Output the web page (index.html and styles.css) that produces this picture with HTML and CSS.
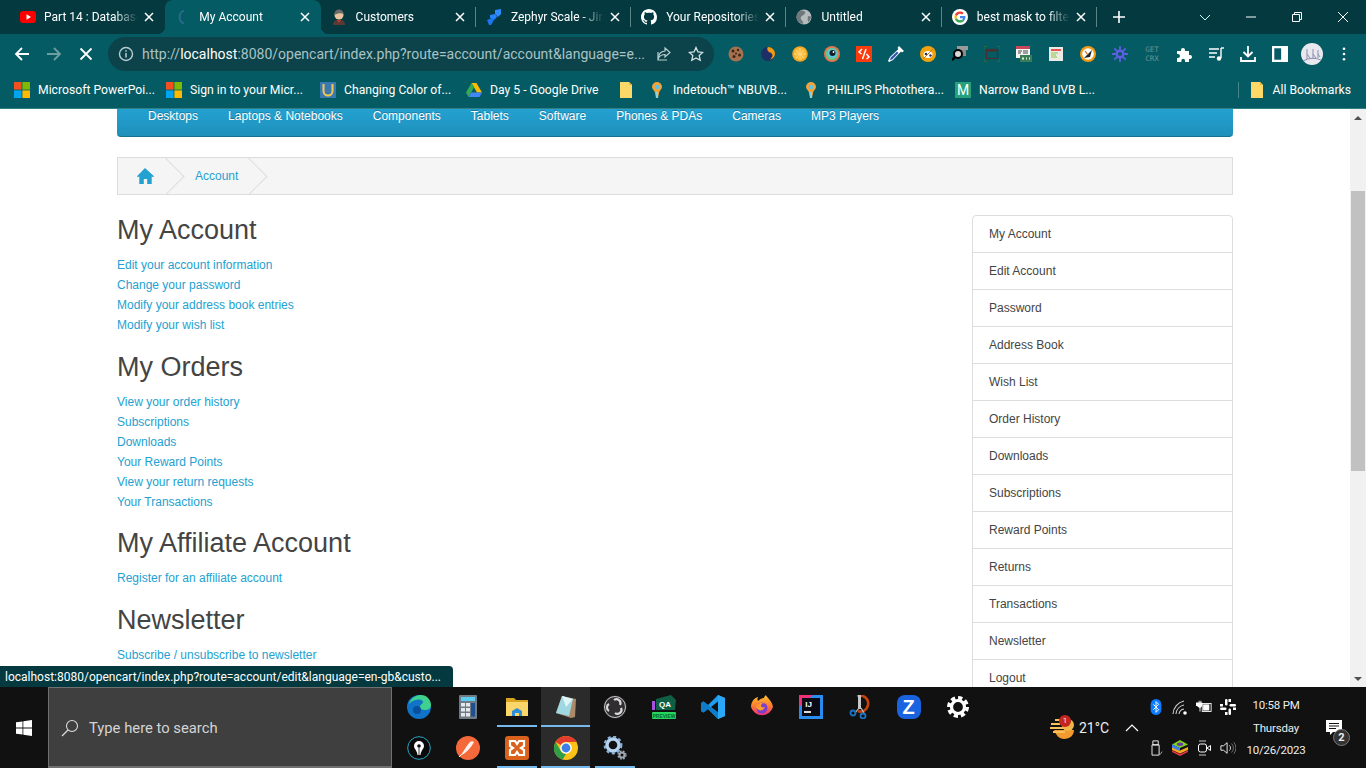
FILE: index.html
```html
<!DOCTYPE html>
<html lang="en">
<head>
  <meta charset="UTF-8" />
  <title>My Account</title>
  <link rel="stylesheet" href="styles.css">
</head>
<body>

<svg class="defs" width="0" height="0">
  <defs>
    <linearGradient id="fox" x1="0" y1="0" x2="0" y2="1"><stop offset="0" stop-color="#ffc12e"/><stop offset=".55" stop-color="#ff7a2f"/><stop offset="1" stop-color="#ec2f78"/></linearGradient>
  </defs>
  <symbol id="x" viewBox="0 0 10 10"><path d="M1 1l8 8M9 1l-8 8" stroke="#fff" stroke-width="1.5" fill="none"/></symbol>
  <symbol id="ms" viewBox="0 0 16 16"><rect width="7.6" height="7.6" fill="#f25022"/><rect x="8.4" width="7.6" height="7.6" fill="#7fba00"/><rect y="8.4" width="7.6" height="7.6" fill="#00a4ef"/><rect x="8.4" y="8.4" width="7.6" height="7.6" fill="#ffb900"/></symbol>
  <symbol id="note" viewBox="0 0 16 16"><path d="M2 0h9l3 3v13H2z" fill="#fcd868"/><path d="M11 0l3 3h-3z" fill="#e8b93c"/></symbol>
  <symbol id="pin" viewBox="0 0 16 16"><path d="M8 0a5 5 0 0 1 5 5c0 2-2 3-2.8 5L9 16H7l-1.200-6C5 8 3 7 3 5a5 5 0 0 1 5-5z" fill="#f2a33a"/><circle cx="8" cy="5" r="2.200" fill="#5cc4e8"/><rect x="7" y="10" width="2" height="6" fill="#8fd0de"/></symbol>
  <symbol id="chrome" viewBox="0 0 24 24"><circle cx="12" cy="12" r="12" fill="#fbc116"/><path d="M12 0a12 12 0 0 1 10.400 6H12a6 6 0 0 0-5.200 3L1.600 6A12 12 0 0 1 12 0z" fill="#e33b2e"/><path d="M1.600 6l5.200 9a6 6 0 0 0 5.200 3l-3.400 5.600A12 12 0 0 1 1.600 6z" fill="#2f9e49"/><circle cx="12" cy="12" r="5.800" fill="#fff"/><circle cx="12" cy="12" r="4.400" fill="#3c7fe6"/></symbol>
</svg>

<header class="tabbar">
  <div class="tab">
    <svg class="tab-ico" viewBox="0 0 16 16"><rect y="2" width="16" height="12" rx="3" fill="#f00"/><path d="M6.500 5.200v5.600L11 8z" fill="#fff"/></svg>
    <span class="tab-title">Part 14 : Databases</span>
    <svg class="tab-x"><use href="#x"/></svg>
  </div>
  <div class="tab tab-active">
    <svg class="tab-ico" viewBox="0 0 16 16"><path d="M9 1.500A7 7 0 0 0 9 14.500" stroke="#2a6c8c" stroke-width="1.800" fill="none"/></svg>
    <span class="tab-title">My Account</span>
    <svg class="tab-x"><use href="#x"/></svg>
  </div>
  <div class="tab tab-sep">
    <svg class="tab-ico" viewBox="0 0 16 16"><path d="M2 16c0-4 2-5 6-5s6 1 6 5z" fill="#5b3a34"/><path d="M6 11h4l-2 3z" fill="#c0392b"/><circle cx="8" cy="6" r="4.500" fill="#e8c4a0"/><path d="M3.500 6c0-4 2-5.500 4.500-5.500S12.500 2 12.500 5C10 4 7 4 3.500 6z" fill="#6b6b6b"/></svg>
    <span class="tab-title">Customers</span>
    <svg class="tab-x"><use href="#x"/></svg>
  </div>
  <div class="tab tab-sep">
    <svg class="tab-ico" viewBox="0 0 16 16"><path d="M9 1l6-1v5l-3 3-3-3z" fill="#2f8cff"/><path d="M4 6l5-1 2 3-3 3-4-2z" fill="#2684ff"/><path d="M1 11l5-2 2 2-3 5H3z" fill="#1c74f0"/></svg>
    <span class="tab-title">Zephyr Scale - Jira</span>
    <svg class="tab-x"><use href="#x"/></svg>
  </div>
  <div class="tab tab-sep">
    <svg class="tab-ico" viewBox="0 0 16 16"><path fill="#fff" d="M8 0C3.580 0 0 3.580 0 8c0 3.540 2.290 6.530 5.470 7.590.4.070.55-.170.55-.410 0-.190-.010-.820-.010-1.490-2.010.370-2.530-.490-2.690-.940-.090-.230-.480-.940-.820-1.130-.280-.150-.680-.520-.010-.530.630-.010 1.080.580 1.230.820.720 1.210 1.870.870 2.330.660.070-.520.280-.870.510-1.070-1.780-.2-3.640-.890-3.640-3.950 0-.870.310-1.590.820-2.150-.080-.2-.360-1.020.080-2.120 0 0 .670-.210 2.200.820.640-.180 1.320-.270 2-.270.680 0 1.360.090 2 .270 1.530-1.040 2.200-.820 2.200-.820.440 1.100.160 1.920.080 2.120.510.560.820 1.270.820 2.150 0 3.070-1.870 3.750-3.650 3.950.290.250.540.730.540 1.480 0 1.070-.010 1.930-.010 2.200 0 .210.150.460.550.380A8.013 8.013 0 0 0 16 8c0-4.420-3.580-8-8-8z"/></svg>
    <span class="tab-title">Your Repositories</span>
    <svg class="tab-x"><use href="#x"/></svg>
  </div>
  <div class="tab tab-sep">
    <svg class="tab-ico" viewBox="0 0 16 16"><circle cx="8" cy="8" r="7.500" fill="#b5bcbe"/><path d="M5 1.500c3 0 5 1 4 3S6 6 5 8s1 3 2 5-1 2-2 1.500C2 13 .5 10.500.5 8S2 2.500 5 1.500zM12 7l3 .5c0 2-1 4-2.500 5.500-1-1-1-3-.5-6z" fill="#6f787a"/></svg>
    <span class="tab-title">Untitled</span>
    <svg class="tab-x"><use href="#x"/></svg>
  </div>
  <div class="tab tab-sep">
    <svg class="tab-ico" viewBox="0 0 16 16"><circle cx="8" cy="8" r="8" fill="#fff"/><path d="M13.400 8.100c0-.4 0-.8-.1-1.100H8v2.200h3c-.1.700-.5 1.300-1.100 1.700l1.800 1.400c1-1 1.700-2.400 1.700-4.200z" fill="#4285f4"/><path d="M8 13.500c1.500 0 2.700-.5 3.700-1.300l-1.800-1.400c-.5.300-1.100.5-1.900.5-1.400 0-2.700-1-3.100-2.300L3 10.400c.9 1.900 2.800 3.100 5 3.100z" fill="#34a853"/><path d="M4.900 9c-.2-.7-.2-1.400 0-2L3 5.600C2.300 7.100 2.300 8.900 3 10.400z" fill="#fbbc05"/><path d="M8 4.700c.8 0 1.500.3 2.100.8l1.600-1.600C10.700 3 9.400 2.500 8 2.500c-2.200 0-4.100 1.200-5 3.100L4.900 7c.4-1.300 1.700-2.300 3.100-2.300z" fill="#ea4335"/></svg>
    <span class="tab-title">best mask to filter</span>
    <svg class="tab-x"><use href="#x"/></svg>
  </div>
  <svg class="new-tab" viewBox="0 0 12 12"><path d="M6 0v12M0 6h12" stroke="#fff" stroke-width="1.600"/></svg>
  <div class="win-btns">
    <svg viewBox="0 0 12 12"><path d="M1 4l5 5 5-5" stroke="#cfe" stroke-width="1" fill="none"/></svg>
    <svg viewBox="0 0 12 12"><path d="M1 6h10" stroke="#fff" stroke-width="1"/></svg>
    <svg viewBox="0 0 12 12"><path d="M1.500 3.500h7v7h-7zM3.500 3.500v-2h7v7h-2" stroke="#fff" stroke-width="1" fill="none"/></svg>
    <svg viewBox="0 0 12 12"><path d="M1 1l10 10M11 1L1 11" stroke="#fff" stroke-width="1"/></svg>
  </div>
</header>

<nav class="toolbar">
  <div class="nav-btn"><svg viewBox="0 0 16 16"><path d="M15 8H2M8 2L2 8l6 6" stroke="#fff" stroke-width="1.800" fill="none"/></svg></div>
  <div class="nav-btn"><svg viewBox="0 0 16 16"><path d="M1 8h13M8 2l6 6-6 6" stroke="#6f9ea2" stroke-width="1.800" fill="none"/></svg></div>
  <div class="nav-btn"><svg viewBox="0 0 16 16"><path d="M2.500 2.500l11 11M13.500 2.500l-11 11" stroke="#fff" stroke-width="1.800"/></svg></div>
  <div class="omnibox">
    <svg class="omni-info" viewBox="0 0 16 16"><circle cx="8" cy="8" r="6.500" stroke="#b9cdd0" stroke-width="1.400" fill="none"/><path d="M8 7v4.500M8 4.300v1.400" stroke="#b9cdd0" stroke-width="1.500"/></svg>
    <span class="url"><span class="url-dim">http://</span>localhost<span class="url-dim">:8080/opencart/index.php?route=account/account&amp;language=e...</span></span>
    <svg class="omni-share" viewBox="0 0 16 16"><path d="M9 2l5 4.500L9 11V8.500C6 8.500 4 9.500 2.500 12c0-4 2.500-6.500 6.500-7z" stroke="#b9cdd0" stroke-width="1.200" fill="none"/><path d="M11 14H2V6" stroke="#b9cdd0" stroke-width="1.200" fill="none"/></svg>
    <svg class="omni-star" viewBox="0 0 16 16"><path d="M8 1.500l2 4.400 4.700.5-3.500 3.200 1 4.700L8 11.900l-4.200 2.400 1-4.700L1.300 6.400 6 5.900z" stroke="#d5e2e4" stroke-width="1.300" fill="none"/></svg>
  </div>
  <div class="exts">
    <div class="ext"><svg viewBox="0 0 16 16"><circle cx="8" cy="8" r="7.500" fill="#a5714f"/><circle cx="5" cy="5" r="1.500" fill="#3e2415"/><circle cx="10" cy="4" r="1.200" fill="#3e2415"/><circle cx="11.500" cy="9" r="1.500" fill="#3e2415"/><circle cx="6" cy="10.500" r="1.500" fill="#3e2415"/><circle cx="8" cy="7.500" r="1" fill="#3e2415"/></svg></div>
    <div class="ext"><svg viewBox="0 0 16 16"><circle cx="8" cy="8" r="7" fill="#1d2f66"/><path d="M8 1c4 0 7 3 7 6.500 0 3-2 5.500-5 6 2.500-2 3-4 2-5.500S9 6.500 8 5 7 2 8 1z" fill="#f29a12"/></svg></div>
    <div class="ext"><svg viewBox="0 0 16 16"><circle cx="8" cy="8" r="7.800" fill="#f4a623"/><circle cx="8" cy="8" r="6" fill="#fbbd3c"/><path d="M8 2v12M2 8h12M3.800 3.800l8.400 8.400M12.200 3.800l-8.400 8.400" stroke="#ffe19a" stroke-width=".7"/></svg></div>
    <div class="ext"><svg viewBox="0 0 16 16"><circle cx="8" cy="8" r="8" fill="#e8734a"/><circle cx="8" cy="8" r="6.200" fill="#67c587"/><circle cx="8.300" cy="7.400" r="4.600" fill="#5fc8e0"/><circle cx="8.500" cy="7" r="3" fill="#14202b"/><circle cx="9.500" cy="6" r=".9" fill="#fff"/></svg></div>
    <div class="ext"><svg viewBox="0 0 16 16"><rect width="16" height="16" fill="#fc3a0c"/><path d="M6 3L3 6l2.500 2M6.500 13L10 3M10.500 8l2.500 3-2.500 2" stroke="#fff" stroke-width="1.500" fill="none"/></svg></div>
    <div class="ext"><svg viewBox="0 0 16 16"><path d="M11 0l5 5-2 1.500-1 -1L5 14l-4 2-1-1 2-4 8.500-8-1-1z" fill="#fff"/><path d="M9 5.500L2.800 11.500 1.800 14.200l2.700-1L10.500 7z" fill="#3558b8"/></svg></div>
    <div class="ext"><svg viewBox="0 0 16 16"><circle cx="8" cy="8" r="8" fill="#f2a20c"/><ellipse cx="8" cy="8.500" rx="4.500" ry="3.500" fill="#fff"/><circle cx="6" cy="8" r="1.300" fill="#2b2b55"/><circle cx="10.500" cy="9.500" r="1.200" fill="#2b2b55"/><path d="M3 13L13 3" stroke="#c9780a" stroke-width="1"/></svg></div>
    <div class="ext"><svg viewBox="0 0 16 16"><rect x="5" y="0" width="11" height="4" fill="#9a9a9a"/><rect x="10" y="4" width="4" height="6" fill="#8a8a8a"/><circle cx="6" cy="8" r="4" stroke="#000" stroke-width="2" fill="#d8d8d8"/><path d="M3 11l-3 3" stroke="#000" stroke-width="2.500"/></svg></div>
    <div class="ext"><svg viewBox="0 0 16 16"><path d="M0 3V0h3M13 0h3v3M16 13v3h-3M3 16H0v-3" stroke="#2d6e36" stroke-width="1.300" fill="none"/><rect x="2.500" y="3.500" width="11" height="9" stroke="#4a2f30" stroke-width="1.200" fill="none"/><rect x="2.500" y="3.500" width="11" height="2" fill="#4a2f30"/></svg></div>
    <div class="ext"><svg viewBox="0 0 16 16"><rect y="0" width="14" height="12" fill="#f4f4f4"/><rect width="14" height="3" fill="#c9455a"/><path d="M2 5h4M2 7h3M7 5h5M7 7h5" stroke="#333" stroke-width=".9"/><rect x="4" y="9" width="12" height="7" fill="#3a7d58"/><path d="M6 12.500h2M10 12.500h1M13 12.500h1" stroke="#d8f5d8" stroke-width="2"/></svg></div>
    <div class="ext"><svg viewBox="0 0 16 16"><rect width="14" height="14" x="1" y="1" fill="#eceae6"/><rect x="3" y="3" width="10" height="2" fill="#e9554e"/><path d="M3 7h7M3 9h5M3 11h6" stroke="#8dc63f" stroke-width="1"/></svg></div>
    <div class="ext"><svg viewBox="0 0 16 16"><circle cx="8" cy="8" r="8" fill="#f29a12"/><circle cx="8" cy="8" r="5.800" fill="#fff"/><path d="M4 12l8-8-2 7z" fill="#222"/><path d="M5 5l3 4" stroke="#c7641c" stroke-width="1.200"/></svg></div>
    <div class="ext"><svg viewBox="0 0 16 16"><g stroke="#5b5fe0" stroke-width="1.800"><path d="M8 0v16M0 8h16M2.300 2.300l11.400 11.400M13.700 2.300L2.300 13.700"/></g><circle cx="8" cy="8" r="4.500" fill="#5b5fe0"/><circle cx="8" cy="8" r="2" fill="#05595f"/></svg></div>
    <div class="ext ext-crx"><span>GET</span><span>CRX</span></div>
    <div class="ext"><svg viewBox="0 0 16 16"><path d="M1 5h4V4a2 2 0 1 1 4 0v1h4v4h1a2 2 0 1 1 0 4h-1v3H9v-1.500a1.800 1.800 0 0 0-3.600 0V16H1v-4h1a2 2 0 1 0 0-4H1z" fill="#fff"/></svg></div>
    <div class="ext"><svg viewBox="0 0 16 16"><path d="M1 3h10M1 7h8M1 11h6" stroke="#fff" stroke-width="1.500"/><path d="M13 2v10" stroke="#fff" stroke-width="1.400"/><path d="M13 2h3" stroke="#fff" stroke-width="1.400"/><circle cx="11" cy="12.500" r="2.200" fill="#fff"/></svg></div>
    <div class="ext"><svg viewBox="0 0 16 16"><path d="M8 0v10M3.500 6L8 10.500 12.500 6M1 11v4h14v-4" stroke="#fff" stroke-width="1.800" fill="none"/></svg></div>
    <div class="ext"><svg viewBox="0 0 14 14"><rect x="1" y="1" width="12" height="12" stroke="#fff" stroke-width="2" fill="none"/><rect x="8" y="1" width="5" height="12" fill="#fff"/></svg></div>
    <div class="ext"><svg class="avatar" viewBox="0 0 22 22"><circle cx="11" cy="11" r="11" fill="#e8e8ee"/><path d="M6 6v10M6 11l3 4M12 6v10M12 11l3 4M17 7v8M17 11l2 3M2 18q9-5 18-1" stroke="#8d8fb0" stroke-width="1" fill="none"/></svg></div>
    <div class="ext"><svg class="dots" viewBox="0 0 4 16"><circle cx="2" cy="2" r="1.500" fill="#fff"/><circle cx="2" cy="8" r="1.500" fill="#fff"/><circle cx="2" cy="14" r="1.500" fill="#fff"/></svg></div>
  </div>
</nav>

<div class="bookmarks">
  <div class="bm"><svg class="bm-ico"><use href="#ms"/></svg><span>Microsoft PowerPoi...</span></div>
  <div class="bm"><svg class="bm-ico"><use href="#ms"/></svg><span>Sign in to your Micr...</span></div>
  <div class="bm"><svg class="bm-ico" viewBox="0 0 16 16"><rect width="16" height="16" fill="#3a78b0"/><path d="M3.500 2v7a4.500 4.500 0 0 0 9 0V2" stroke="#f5c94e" stroke-width="2" fill="none"/></svg><span>Changing Color of...</span></div>
  <div class="bm"><svg class="bm-ico" viewBox="0 0 16 16"><path d="M5.500 1h5L16 10.500h-5z" fill="#fbbc04"/><path d="M5.500 1L0 10.500 2.500 15 8 5.500z" fill="#34a853"/><path d="M2.500 15h11L16 10.500H5z" fill="#4285f4"/></svg><span>Day 5 - Google Drive</span></div>
  <div class="bm"><svg class="bm-ico"><use href="#note"/></svg></div>
  <div class="bm"><svg class="bm-ico"><use href="#pin"/></svg><span>Indetouch™ NBUVB...</span></div>
  <div class="bm"><svg class="bm-ico"><use href="#pin"/></svg><span>PHILIPS Photothera...</span></div>
  <div class="bm"><div class="bm-m">M</div><span>Narrow Band UVB L...</span></div>
  <div class="bm bm-all"><svg class="bm-ico"><use href="#note"/></svg><span>All Bookmarks</span></div>
</div>

<div class="viewport">
  <main class="page">
    <div class="container">
      <ul class="menu">
        <li>Desktops</li>
        <li>Laptops &amp; Notebooks</li>
        <li>Components</li>
        <li>Tablets</li>
        <li>Software</li>
        <li>Phones &amp; PDAs</li>
        <li>Cameras</li>
        <li>MP3 Players</li>
      </ul>

      <ul class="breadcrumb">
        <li><svg class="home" viewBox="0 0 18 16"><path d="M9 0l9 8.200-1 1.100-1.300-1.100V16h-4.500v-5H7.800v5H3.300V8.200L2 9.300 1 8.200z" fill="#23a1d1"/></svg></li>
        <li><a href="#">Account</a></li>
      </ul>

      <div class="columns">
        <div class="content">
          <h2>My Account</h2>
          <ul class="links">
            <li><a href="#">Edit your account information</a></li>
            <li><a href="#">Change your password</a></li>
            <li><a href="#">Modify your address book entries</a></li>
            <li><a href="#">Modify your wish list</a></li>
          </ul>
          <h2>My Orders</h2>
          <ul class="links">
            <li><a href="#">View your order history</a></li>
            <li><a href="#">Subscriptions</a></li>
            <li><a href="#">Downloads</a></li>
            <li><a href="#">Your Reward Points</a></li>
            <li><a href="#">View your return requests</a></li>
            <li><a href="#">Your Transactions</a></li>
          </ul>
          <h2>My Affiliate Account</h2>
          <ul class="links">
            <li><a href="#">Register for an affiliate account</a></li>
          </ul>
          <h2>Newsletter</h2>
          <ul class="links">
            <li><a href="#">Subscribe / unsubscribe to newsletter</a></li>
          </ul>
        </div>
        <aside class="side">
          <a href="#">My Account</a>
          <a href="#">Edit Account</a>
          <a href="#">Password</a>
          <a href="#">Address Book</a>
          <a href="#">Wish List</a>
          <a href="#">Order History</a>
          <a href="#">Downloads</a>
          <a href="#">Subscriptions</a>
          <a href="#">Reward Points</a>
          <a href="#">Returns</a>
          <a href="#">Transactions</a>
          <a href="#">Newsletter</a>
          <a href="#">Logout</a>
        </aside>
      </div>
    </div>
  </main>

  <div class="scrollbar">
    <div class="arrow arrow-up"></div>
    <div class="thumb"></div>
    <div class="arrow arrow-down"></div>
  </div>

  <div class="status">localhost:8080/opencart/index.php?route=account/edit&amp;language=en-gb&amp;custo...</div>
</div>

<footer class="taskbar">
  <div class="start"><svg viewBox="0 0 16 16"><path d="M0 2.300l6.500-.9v6.200H0zM7.300 1.300L16 0v7.600H7.300zM0 8.400h6.500v6.200L0 13.700zM7.300 8.400H16V16l-8.700-1.300z" fill="#fff"/></svg></div>
  <div class="search">
    <svg viewBox="0 0 18 18"><circle cx="11" cy="7" r="5.500" stroke="#ddd" stroke-width="1.100" fill="none"/><path d="M7 11l-6 6" stroke="#ddd" stroke-width="1.200"/></svg>
    <span>Type here to search</span>
  </div>
  <div class="apps">
    <div class="app"><svg viewBox="0 0 24 24"><circle cx="12" cy="12" r="12" fill="#1173c7"/><path d="M2 9C4 2 10 0 14 0c6 0 10 5 10 10 0 4-3 5-6 5-3 0-5-1-5-3 0-3 3-3 3-5C16 4 8 3 2 9z" fill="#3ed08c"/><circle cx="10" cy="15" r="4" fill="#0a4f9e"/></svg></div>
    <div class="app"><svg viewBox="0 0 24 24"><rect x="3" y="0" width="18" height="24" rx="1" fill="#6e7a85"/><rect x="5" y="2" width="14" height="4" fill="#5ccdf2"/><g fill="#e4e8ec"><rect x="5" y="8" width="4" height="3.500"/><rect x="10" y="8" width="4" height="3.500"/><rect x="5" y="13" width="4" height="3.500"/><rect x="10" y="13" width="4" height="3.500"/><rect x="5" y="18" width="4" height="3.500"/><rect x="10" y="18" width="4" height="3.500"/></g><rect x="15" y="8" width="4" height="13.500" fill="#1d4f91"/></svg></div>
    <div class="app app-on"><svg viewBox="0 0 24 24"><path d="M1 3h8l2 2h12v4H1z" fill="#d9a520"/><path d="M1 7h22v14H1z" fill="#fbd76b"/><path d="M7 21v-5l5-3 5 3v5h-3v-3h-4v3z" fill="#2f8fd6"/></svg></div>
    <div class="app app-active"><svg viewBox="0 0 24 24"><path d="M8 1l14 3-1 18-4 1-15-5z" fill="#a98b6a"/><path d="M8 1l11 3-4 17L2 18z" fill="#9fd8e2"/><path d="M8 1l11 3-7 8z" fill="#dff4f6"/></svg></div>
    <div class="app"><svg viewBox="0 0 24 24"><circle cx="12" cy="12" r="11.500" fill="#302e31"/><circle cx="12" cy="12" r="10.500" stroke="#c9c9c9" stroke-width="1" fill="none"/><g stroke="#d9d9d9" stroke-width="2.200" fill="none"><path d="M11 5a4 4 0 0 1 6 5"/><path d="M18 13a4 4 0 0 1-6 5"/><path d="M6 16a4 4 0 0 1 0-7"/></g></svg></div>
    <div class="app"><svg class="qa" viewBox="0 0 26 24"><path d="M5 4L20 0l5 5-1 10H5z" fill="#0f5f45"/><rect x="1" y="6" width="3" height="9" fill="#a94fe0"/><text x="14" y="12" class="qa-t">QA</text><rect x="1" y="17" width="24" height="7" rx="1" fill="#27d65f"/><text x="13" y="22.700" class="qa-p">PREVIEW</text></svg></div>
    <div class="app"><svg viewBox="0 0 24 24"><path d="M17 0l7 3v18l-7 3L7 14l-4.500 3.500L0 16v-8l2.500-1.500L7 10z" fill="#1f9cf0"/><path d="M17 6.500L10 12l7 5.500z" fill="#111"/><path d="M2.500 9L5 12l-2.500 3z" fill="#111"/><path d="M17 0l7 3v18l-7 3z" fill="#2aa7f5"/><path d="M0 8l2.500-1.500L17 17.500 17 24 7 14l-4.500 3.500L0 16z" fill="#0f7cc8"/></svg></div>
    <div class="app"><svg viewBox="0 0 24 24"><path d="M1 12C1 7 4 3 8 2 7 4 7.500 5 8 6c2-2 4-3 6-3 0-1 1-2 2-3 0 2 6 5 7 12A11.500 11.500 0 0 1 1 12z" fill="url(#fox)"/><circle cx="12" cy="13" r="5.500" fill="#7a3fd0"/><path d="M6 11c2-3 6-4 9-3-2 0-4 1-4 3 0 1 2 2 4 1-1 3-4 4-6 3-2-1-3-2-3-4z" fill="#ff9a2e"/></svg></div>
    <div class="app"><svg viewBox="0 0 24 24"><rect width="24" height="24" fill="#2b8cf0"/><path d="M0 0h14L0 12z" fill="#f0317a"/><rect x="3" y="3" width="18" height="18" fill="#0a0a14"/><text x="9.500" y="12" class="ij-t">IJ</text><rect x="5" y="16" width="7" height="2" fill="#ddd"/></svg></div>
    <div class="app"><svg viewBox="0 0 24 24"><path d="M9 1c7-2 12 3 11 9-1 5-6 8-10 6" stroke="#c8420c" stroke-width="2.600" fill="none"/><path d="M10 0h3v14h-3z" fill="#c7c7c7"/><path d="M11 13l-4 5M13 13l3 5" stroke="#c7c7c7" stroke-width="1.200"/><circle cx="5" cy="18" r="2.500" stroke="#1a74c4" stroke-width="1.800" fill="none"/><circle cx="15" cy="21" r="2.500" stroke="#1a74c4" stroke-width="1.800" fill="none"/></svg></div>
    <div class="app"><div class="zap">Z</div></div>
    <div class="app"><svg viewBox="0 0 24 24"><circle cx="12" cy="12" r="6.500" stroke="#fff" stroke-width="3.200" fill="none"/><circle cx="12" cy="12" r="9.200" stroke="#fff" stroke-width="3.600" stroke-dasharray="4.200 3" fill="none"/></svg></div>

    <div class="app"><svg viewBox="0 0 24 24"><circle cx="12" cy="12" r="11.300" fill="#0a0a0a" stroke="#27a6c4" stroke-width="1"/><path d="M7 10a5 5 0 0 1 10 0c0 3-3 4-3.500 9h-3C10 14 7 13 7 10z" fill="#fff"/><circle cx="12" cy="10" r="1.800" fill="#0a0a0a"/><path d="M12 12v7" stroke="#0a0a0a" stroke-width=".8"/></svg></div>
    <div class="app"><svg viewBox="0 0 24 24"><circle cx="12" cy="12" r="12" fill="#f4683a"/><path d="M5 19c4-1 10-7 13-13-1-1-3-1-4 0-3 3-5 7-7 10z" fill="#fff" opacity=".9"/><path d="M3 21l3-3" stroke="#fff" stroke-width="1"/></svg></div>
    <div class="app app-on-low"><svg viewBox="0 0 24 24"><rect width="24" height="24" rx="3" fill="#d9621c"/><path d="M5 5h5l2 3 2-3h5v5l-3 2 3 2v5h-5l-2-3-2 3H5v-5l3-2-3-2z" stroke="#fff" stroke-width="2.200" fill="none"/></svg></div>
    <div class="app app-active-low"><svg><use href="#chrome"/></svg></div>
    <div class="app app-on-low"><svg viewBox="0 0 24 24"><circle cx="10" cy="9" r="6" stroke="#b8d4ef" stroke-width="3.400" fill="none"/><circle cx="10" cy="9" r="8.200" stroke="#8bb3d9" stroke-width="2.400" stroke-dasharray="3 2.500" fill="none"/><circle cx="19" cy="19" r="2.500" stroke="#9fa9b3" stroke-width="2" fill="none"/><circle cx="19" cy="19" r="4" stroke="#9fa9b3" stroke-width="1.300" stroke-dasharray="1.800 1.400" fill="none"/></svg></div>
  </div>

  <div class="weather">
    <svg viewBox="0 0 24 24"><path d="M4 14h20c0 5-4 9-10 9-5 0-8-4-10-9z" fill="#f29a2e"/><path d="M1 8h9M0 12h14M3 16h12M5 4h5" stroke="#f5c158" stroke-width="2"/><circle cx="18" cy="9" r="6" fill="#f0b64a"/></svg>
    <span class="weather-badge">1</span>
    <span>21°C</span>
  </div>
  <svg class="tray-up" viewBox="0 0 14 8"><path d="M1 7l6-6 6 6" stroke="#fff" stroke-width="1.200" fill="none"/></svg>
  <div class="tray">
    <svg viewBox="0 0 16 18"><rect x="2" width="12" height="18" rx="6" fill="#0b7bff"/><path d="M5 6l6 6-3 3V3l3 3-6 6" stroke="#fff" stroke-width="1.100" fill="none"/></svg>
    <svg viewBox="0 0 16 16"><path d="M1 15a14 14 0 0 1 11-13M4 15a10 10 0 0 1 8-9M7 15a6 6 0 0 1 5-5" stroke="#ccc" stroke-width="1.100" fill="none"/><circle cx="13" cy="14" r="1.800" fill="#fff"/></svg>
    <svg viewBox="0 0 18 16"><path d="M0 3h3V1h1v2h1V1h1v2h1v4L5 9v4H4V9L1 7H0z" fill="#fff"/><rect x="7" y="4" width="10" height="9" stroke="#fff" fill="none"/><rect x="8" y="5" width="7" height="7" fill="#fff"/></svg>
    <svg viewBox="0 0 16 16"><g fill="#fff"><rect x="5" y="0" width="2.500" height="6.500" rx="1.200"/><rect x="8.500" y="9.500" width="2.500" height="6.500" rx="1.200"/><rect x="0" y="8.500" width="6.500" height="2.500" rx="1.200"/><rect x="9.500" y="5" width="6.500" height="2.500" rx="1.200"/><rect x="8.500" y="0" width="2.500" height="3"/><rect x="13" y="8.500" width="3" height="2.500"/><rect x="5" y="13" width="2.500" height="3"/><rect x="0" y="5" width="3" height="2.500"/></g></svg>
    <svg viewBox="0 0 16 18"><path d="M3.500 5.500h8V17h-8zM4.500 1h6v4.500h-6z" stroke="#fff" stroke-width="1" fill="none"/><path d="M11 15l1.500 1.500L15 13" stroke="#aaa" stroke-width="1" fill="none"/></svg>
    <svg viewBox="0 0 16 16"><path d="M8 8L0 4.500 8 0l8 4.500z" fill="#7ed321"/><path d="M0 7l8 3.500L16 7v3l-8 3.500L0 10z" fill="#f5a623"/><path d="M0 10.500l8 3.500 8-3.500V12l-8 4-8-4z" fill="#e8344a"/><path d="M0 4.500L8 8v3L0 7.500z" fill="#3b82f6"/><ellipse cx="8" cy="4.300" rx="3.200" ry="1.700" fill="#6a3aa0"/></svg>
    <svg viewBox="0 0 16 16"><path d="M3 1h7M3 15h7" stroke="#ddd" stroke-width=".9"/><rect x="2.500" y="4" width="8" height="8" rx="2" stroke="#fff" fill="none"/><path d="M11 8l3.500-2.500v5z" stroke="#fff" fill="none"/></svg>
    <svg viewBox="0 0 18 16"><path d="M1 5.500h3L8 2v12l-4-3.500H1z" stroke="#fff" fill="none"/><path d="M10.500 5a4 4 0 0 1 0 6" stroke="#eee" fill="none"/><path d="M13 3a7 7 0 0 1 0 10M15.500 1.500a10 10 0 0 1 0 13" stroke="#777" fill="none"/></svg>
  </div>
  <div class="clock">
    <span>10:58 PM</span>
    <span>Thursday</span>
    <span>10/26/2023</span>
  </div>
  <div class="notif">
    <svg viewBox="0 0 16 16"><path d="M0 0h16v12H7l-3 3v-3H0z" fill="#fff"/><path d="M3 3.500h10M3 6h10M3 8.500h7" stroke="#111" stroke-width="1"/></svg>
    <span class="notif-badge">2</span>
  </div>
</footer>

</body>
</html>
```
FILE: styles.css
```css
* {
  box-sizing: border-box;
}

html, body {
  margin: 0;
  height: 768px;
  overflow: hidden;
}

body {
  display: flex;
  flex-direction: column;
  font-family: Roboto, "Noto Sans", sans-serif;
  background-color: #fff;
}

svg {
  display: block;
  flex: none;
}

.defs {
  position: absolute;
}

/* tab strip */
.tabbar {
  display: flex;
  align-items: center;
  flex: 0 0 34px;
  padding-left: 10px;
  background-color: #03393f;
  color: #fff;
  font-size: 12px;
}

.tab {
  display: flex;
  align-items: center;
  width: 155.3px;
  height: 34px;
  padding: 0 11px 0 10px;
  position: relative;
}

.tab-active {
  background-color: #055b63;
  border-radius: 8px 8px 0 0;
}

/* little flares at the foot of the open tab */
.tab-active::before,
.tab-active::after {
  content: "";
  position: absolute;
  bottom: 0;
  width: 8px;
  height: 8px;
}

.tab-active::before {
  left: -8px;
  background-image: radial-gradient(circle at 0 0, transparent 8px, #055b63 8.500px);
}

.tab-active::after {
  right: -8px;
  background-image: radial-gradient(circle at 100% 0, transparent 8px, #055b63 8.500px);
}

.tab-sep::after {
  content: "";
  position: absolute;
  right: 0;
  top: 7px;
  height: 20px;
  width: 1px;
  background-color: #5f8488;
}

.tab-ico {
  width: 16px;
  height: 16px;
}

.tab-title {
  flex: 1;
  margin-left: 8px;
  white-space: nowrap;
  overflow: hidden;
  -webkit-mask-image: linear-gradient(to right, #000 75%, transparent 100%);
  mask-image: linear-gradient(to right, #000 75%, transparent 100%);
}

.tab-sep .tab-title {
  margin-left: 9px;
}

.tab-x {
  width: 10px;
  height: 10px;
  margin-left: 6px;
}

.new-tab {
  width: 12px;
  height: 12px;
  margin-left: 16px;
}

.win-btns {
  display: flex;
  margin-left: auto;
}

.win-btns svg {
  width: 12px;
  height: 12px;
  margin: 0 17px;
}

/* address bar row */
.toolbar {
  display: flex;
  align-items: center;
  flex: 0 0 40px;
  padding-left: 6px;
  background-color: #055b63;
}

.nav-btn {
  display: flex;
  justify-content: center;
  width: 32px;
}

.nav-btn svg {
  width: 16px;
  height: 16px;
}

.omnibox {
  display: flex;
  align-items: center;
  width: 606px;
  height: 34px;
  margin-left: 6px;
  padding: 0 10px;
  border-radius: 17px;
  background-color: #0c4249;
  color: #fff;
  font-size: 14px;
}

.omni-info {
  width: 16px;
  height: 16px;
}

.url {
  flex: 1;
  margin-left: 8px;
  white-space: nowrap;
  overflow: hidden;
}

.url-dim {
  color: #a9c2c5;
}

.omni-share {
  width: 16px;
  height: 16px;
  margin-left: 8px;
}

.omni-star {
  width: 16px;
  height: 16px;
  margin-left: 16px;
}

.exts {
  display: flex;
  margin-left: 6px;
}

.ext {
  display: flex;
  align-items: center;
  justify-content: center;
  width: 32px;
  height: 24px;
}

.ext svg {
  width: 16px;
  height: 16px;
}

.ext .avatar {
  width: 22px;
  height: 22px;
}

.ext .dots {
  width: 4px;
  height: 14px;
}

.ext-crx {
  flex-direction: column;
  font-family: "DejaVu Sans Mono", monospace;
  font-size: 7.5px;
  line-height: 9px;
  color: #6a8f92;
}

/* bookmarks */
.bookmarks {
  display: grid;
  grid-template-columns: 152px 154px 146px 152px 31px 154px 152px 1fr auto;
  align-items: center;
  flex: 0 0 35px;
  padding: 0 15px 3px 14px;
  background-color: #055b63;
  border-bottom: 1px solid #2f7f85;
  color: #fff;
  font-size: 12.2px;
}

.bm {
  display: flex;
  align-items: center;
  gap: 8px;
  white-space: nowrap;
}

.bm-ico {
  width: 16px;
  height: 16px;
}

.bm-m {
  width: 16px;
  height: 16px;
  background-color: #26a17b;
  color: #fff;
  font-size: 14px;
  line-height: 16px;
  text-align: center;
}

.bm-all {
  grid-column: 9;
  padding-left: 10px;
  border-left: 1px solid #47858a;
}

/* page */
.viewport {
  display: flex;
  flex: 1;
  min-height: 0;
  position: relative;
}

.page {
  flex: 1;
  overflow: hidden;
  font-family: "Liberation Sans", Arial, sans-serif;
  font-size: 12px;
  color: #666;
}

.container {
  width: 1116px;
  margin: 0 auto;
}

a {
  color: #23a1d1;
  text-decoration: none;
}

.menu {
  display: flex;
  gap: 30px;
  height: 28px;
  margin: 0;
  padding: 0 0 0 31px;
  list-style: none;
  background-image: linear-gradient(to bottom, #23a1d1, #1f90bb);
  border-bottom: 1px solid #16708f;
  border-radius: 0 0 4px 4px;
  color: #fff;
  line-height: 14px;
  text-shadow: 0 -1px 0 rgba(0, 0, 0, 0.25);
}

.breadcrumb {
  display: flex;
  height: 38px;
  margin: 20px 0 20px;
  padding: 0;
  list-style: none;
  overflow: hidden;
  background-color: #f5f5f5;
  border: 1px solid #ddd;
}

.breadcrumb li {
  display: flex;
  align-items: center;
  position: relative;
  height: 36px;
}

.breadcrumb li:first-child {
  padding: 0 16.600px 0 18px;
}

.breadcrumb li:last-child {
  padding: 0 15.600px 0 24.400px;
}

.breadcrumb li::after {
  content: "";
  position: absolute;
  right: -8px;
  top: 5px;
  width: 26px;
  height: 26px;
  border-top: 1px solid #ddd;
  border-right: 1px solid #ddd;
  transform: rotate(45deg);
}

.home {
  width: 18px;
  height: 16px;
}

.columns {
  display: grid;
  grid-template-columns: 1fr 261px;
  gap: 0;
}

h2 {
  margin: 0 0 10px;
  font-size: 27px;
  font-weight: 400;
  line-height: 30px;
  color: #444;
}

.links {
  margin: 0 0 16.700px;
  padding: 0;
  list-style: none;
  line-height: 20px;
}

.side {
  display: flex;
  flex-direction: column;
  align-self: start;
  border: 1px solid #ddd;
  border-radius: 4px;
}

.side a {
  height: 37px;
  padding: 11px 16px 0;
  line-height: 14px;
  color: #444;
  border-bottom: 1px solid #ddd;
}

/* scrollbar */
.scrollbar {
  display: flex;
  flex-direction: column;
  flex: 0 0 16px;
  background-color: #f1f1f1;
}

.arrow {
  flex: 0 0 17px;
  display: flex;
  align-items: center;
  justify-content: center;
}

.arrow::before {
  content: "";
  border-left: 4px solid transparent;
  border-right: 4px solid transparent;
}

.arrow-up::before {
  border-bottom: 4px solid #505050;
}

.arrow-down {
  margin-top: auto;
}

.arrow-down::before {
  border-top: 4px solid #505050;
}

.thumb {
  flex: 0 0 280px;
  margin: 65px 1px 0;
  background-color: #c1c1c1;
}

.status {
  position: absolute;
  left: 0;
  bottom: 0;
  width: 453px;
  height: 21px;
  padding: 3px 0 0 5px;
  border-radius: 0 4px 0 0;
  background-color: #03393f;
  color: #fff;
  font-size: 12px;
  line-height: 16px;
  white-space: nowrap;
  overflow: hidden;
}

/* windows taskbar */
.taskbar {
  display: flex;
  flex: 0 0 81px;
  background-color: #111;
  color: #eee;
}

.taskbar > * {
  flex: none;
}

.start {
  display: flex;
  align-items: center;
  justify-content: center;
  width: 48px;
}

.start svg {
  width: 16px;
  height: 16px;
}

.search {
  display: flex;
  align-items: center;
  gap: 10px;
  width: 344px;
  padding: 1px 0 0 12px;
  background-color: #3f3f3f;
  border: 1px solid #707070;
  border-bottom-width: 2px;
  color: #d4d4d4;
  font-size: 14.800px;
}

.search svg {
  width: 18px;
  height: 18px;
}

.apps {
  display: grid;
  grid-template-columns: repeat(12, 49px);
  grid-template-rows: 40px 41px;
  margin-left: 2px;
}

.app {
  display: flex;
  justify-content: center;
  padding-top: 8px;
  position: relative;
}

.app:nth-child(n+13) {
  padding-top: 9px;
}

.app svg {
  width: 24px;
  height: 24px;
}

.app .qa {
  width: 26px;
}

.app-active,
.app-active-low {
  background-color: #2b2b2b;
}

.app-on::after,
.app-active::after,
.app-on-low::after,
.app-active-low::after {
  content: "";
  position: absolute;
  left: 5px;
  right: 4px;
  bottom: 0;
  height: 2px;
  background-color: #76b9ed;
}

.app-active::after,
.app-active-low::after {
  left: 0;
  right: 0;
}

.qa-t {
  font-family: "Liberation Sans", sans-serif;
  font-size: 8px;
  font-weight: 700;
  fill: #fff;
  text-anchor: middle;
}

.qa-p {
  font-family: "Liberation Sans", sans-serif;
  font-size: 5px;
  font-weight: 700;
  fill: #063;
  text-anchor: middle;
}

.ij-t {
  font-family: "Liberation Sans", sans-serif;
  font-size: 8px;
  font-weight: 700;
  fill: #fff;
  text-anchor: middle;
}

.zap {
  width: 24px;
  height: 24px;
  border-radius: 8px;
  background-color: #1a63e0;
  color: #fff;
  font-family: "Liberation Sans", sans-serif;
  font-size: 20px;
  font-weight: 700;
  line-height: 24px;
  text-align: center;
}

.weather {
  display: flex;
  align-items: center;
  position: relative;
  gap: 5px;
  width: 59px;
  margin-left: 68px;
  font-size: 14px;
}

.weather svg {
  width: 24px;
  height: 24px;
}

.weather-badge {
  position: absolute;
  left: 9px;
  top: 28px;
  width: 12px;
  height: 12px;
  border-radius: 50%;
  background-color: #c4261d;
  font-size: 8px;
  line-height: 12px;
  text-align: center;
}

.tray-up {
  width: 14px;
  height: 8px;
  margin: 37px 0 0 16px;
}

.tray {
  display: grid;
  grid-template-columns: repeat(4, 24px);
  grid-template-rows: 40px 41px;
  justify-items: center;
  align-items: center;
  margin-left: 5px;
}

.tray svg {
  width: 16px;
  height: 16px;
}

.clock {
  display: flex;
  flex-direction: column;
  align-items: center;
  width: 72px;
  padding-top: 7px;
  font-size: 11.500px;
  letter-spacing: -0.2px;
  line-height: 22.500px;
}

.notif {
  position: relative;
  width: 16px;
  margin: 33px 0 0 14px;
}

.notif svg {
  width: 16px;
  height: 16px;
}

.notif-badge {
  position: absolute;
  left: 7px;
  top: 9px;
  width: 17px;
  height: 17px;
  border-radius: 50%;
  background-color: #333;
  border: 1px solid #777;
  font-size: 11px;
  font-weight: 700;
  line-height: 15px;
  text-align: center;
}
```
